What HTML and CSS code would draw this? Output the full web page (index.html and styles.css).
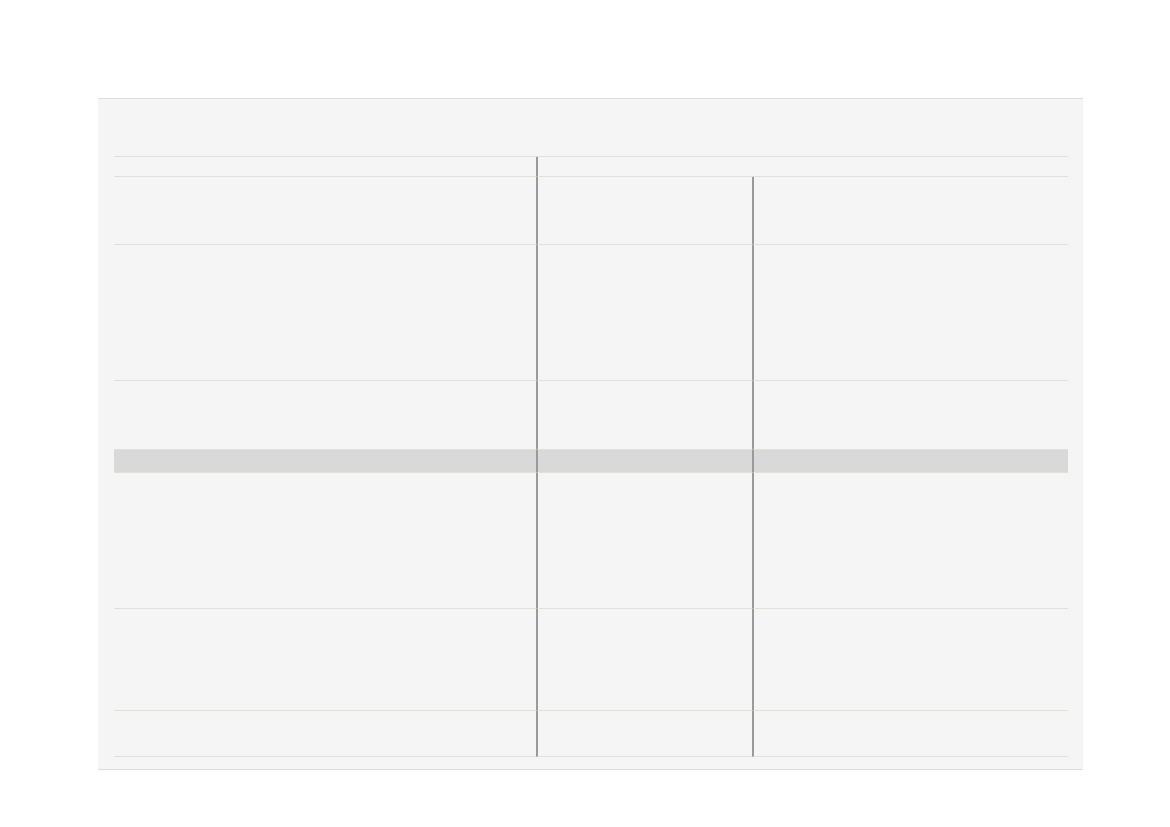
FILE: index.html
```html
<!DOCTYPE html>
<html lang="en">
<head>
<meta charset="utf-8">
<title>Table</title>
<link rel="stylesheet" href="styles.css">
</head>
<body>
<div class="panel">
  <div class="grid">
    <div class="cell h1"></div>
    <div class="cell h2 vl"></div>

    <div class="cell r1"></div><div class="cell r1 vl"></div><div class="cell r1 vl"></div>
    <div class="cell r2"></div><div class="cell r2 vl"></div><div class="cell r2 vl"></div>
    <div class="cell r3"></div><div class="cell r3 vl"></div><div class="cell r3 vl"></div>
    <div class="cell r4 band"></div><div class="cell r4 band vl"></div><div class="cell r4 band vl"></div>
    <div class="cell r5"></div><div class="cell r5 vl"></div><div class="cell r5 vl"></div>
    <div class="cell r6"></div><div class="cell r6 vl"></div><div class="cell r6 vl"></div>
    <div class="cell r7"></div><div class="cell r7 vl"></div><div class="cell r7 vl"></div>
  </div>
</div>
</body>
</html>
```
FILE: styles.css
```css
* { box-sizing: border-box; }
html, body { margin: 0; padding: 0; background: #ffffff; font-family: "Liberation Sans", Arial, sans-serif; }
.panel {
  margin: 98px 0 0 98px;
  width: 985px;
  height: 672px;
  background: #f5f5f5;
  border-top: 1px solid #dedede;
  border-bottom: 1px solid #dedede;
  padding: 57px 15px 0 16px;
}
.grid {
  display: grid;
  grid-template-columns: 422px 216px 316px;
  border-top: 1px solid #e0e0d3;
}
.cell { border-bottom: 1px solid #e0e0d3; }
.vl { border-left: 2px solid #9a9a9a; }
.h1 { height: 20px; }
.h2 { height: 20px; grid-column: span 2; }
.r1 { height: 68px; }
.r2 { height: 136px; }
.r3 { height: 69px; }
.r4 { height: 23px; }
.r5 { height: 136px; }
.r6 { height: 102px; }
.r7 { height: 46px; }
.band { background: #d9d9d9; }
```
